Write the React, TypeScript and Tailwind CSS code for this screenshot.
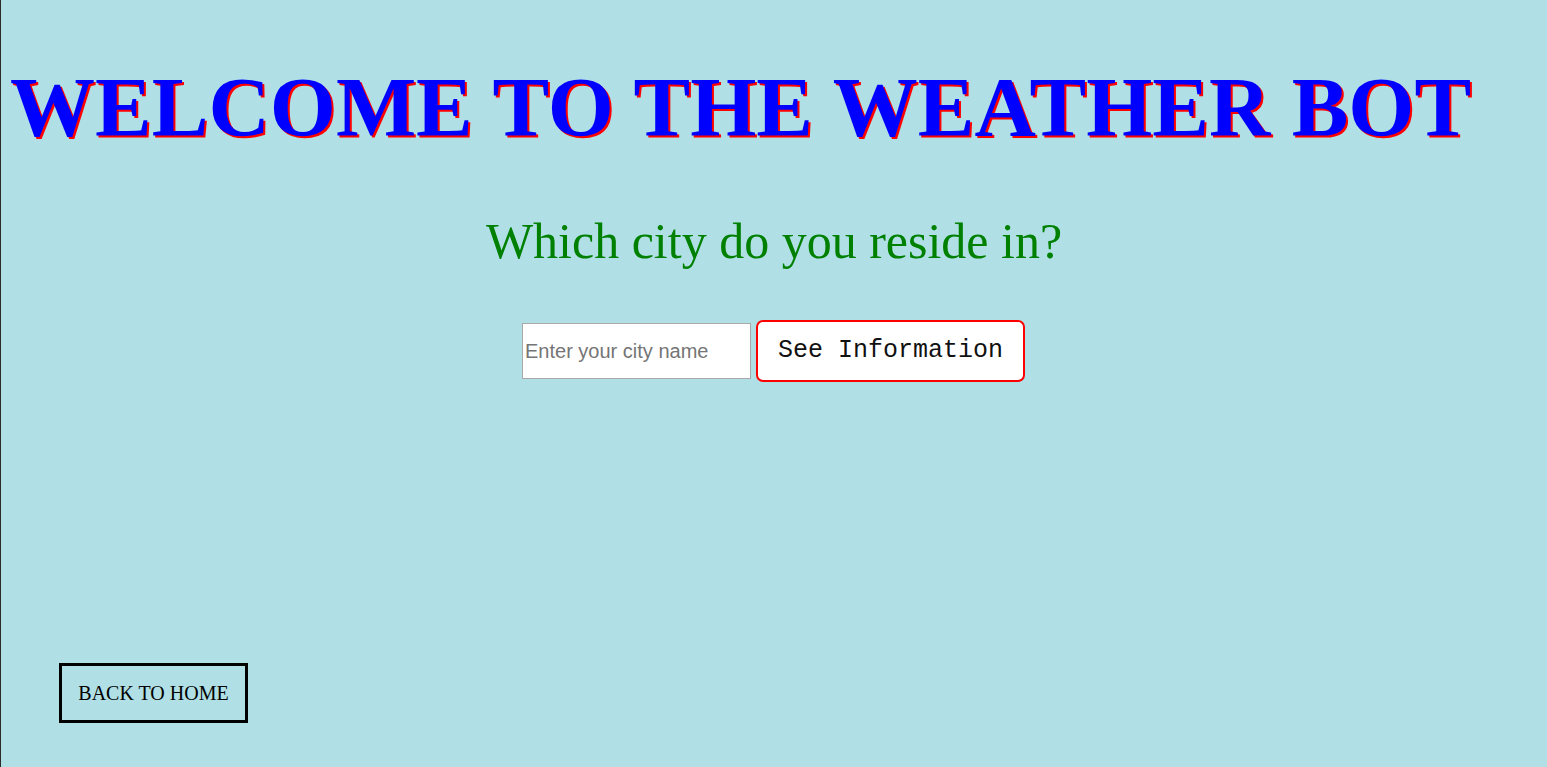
export default function App() {
  return (
    <div className="h-screen w-full bg-[#b0e0e6] border-l border-[#2b2b2b] flex flex-col overflow-hidden">
      <h1 className="mt-[57px] pl-[9px] text-[85px] leading-[100px] font-bold text-[#0000ff] whitespace-nowrap font-['Liberation_Serif',serif] [text-shadow:2px_2px_#ff0000]">
        WELCOME TO THE WEATHER BOT
      </h1>
      <h2 className="mt-[55px] text-center text-[50px] leading-[58px] text-[#008000] font-['Liberation_Serif',serif]">
        Which city do you reside in?
      </h2>
      <div className="mt-[50px] flex justify-center items-center gap-[5px] pr-[1px]">
        <input
          type="text"
          placeholder="Enter your city name"
          className="w-[229px] h-[56px] bg-white border border-[#a9a9a9] px-[2px] text-[20px] text-black placeholder:text-[#757575] font-['Liberation_Sans',sans-serif] outline-none"
        />
        <button className="w-[269px] h-[62px] bg-white border-2 border-[#ff0000] rounded-[7px] text-[25px] text-[#111] font-['Liberation_Mono',monospace]">
          See Information
        </button>
      </div>
      <div className="mt-auto mb-[44px] ml-[58px]">
        <button className="w-[189px] h-[60px] border-[3px] border-black text-[20px] text-black font-['Liberation_Serif',serif]">
          BACK TO HOME
        </button>
      </div>
    </div>
  );
}
